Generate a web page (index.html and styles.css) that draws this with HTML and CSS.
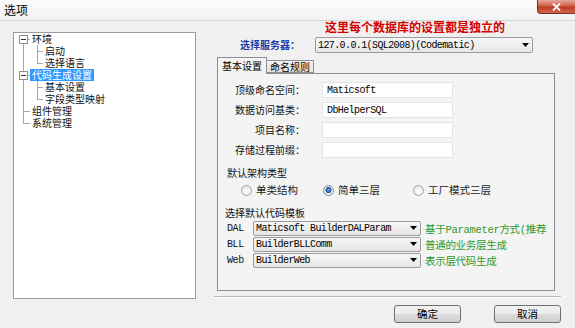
FILE: index.html
```html
<!DOCTYPE html>
<html lang="zh-CN">
<head>
<meta charset="utf-8">
<title>选项</title>
<link rel="stylesheet" href="styles.css">
</head>
<body>
<div class="window">
  <div class="titlebar">
    <span class="title">选项</span>
    <span class="close">
      <svg width="9" height="8" viewBox="0 0 9 8"><path d="M1 0.5 L8 7.5 M8 0.5 L1 7.5" stroke="#fff" stroke-width="1.8" fill="none"/></svg>
    </span>
  </div>
  <div class="main">
    <div class="tree">
      <div class="tree-row">
        <svg class="gutter g0" width="16" height="12"><rect x="5.5" y="2.5" width="8" height="8" fill="#fff" stroke="#8f8f8f"/><path d="M7 6.5 H12" stroke="#333"/><path d="M9.5 10.5 V12 M13.5 6.5 H16" stroke="#a8a8a8"/></svg>
        <span class="label">环境</span>
      </div>
      <div class="tree-row">
        <svg class="gutter g1" width="29" height="12"><path d="M9.5 0 V12 M23.5 0 V12 M23.5 6.5 H29" stroke="#a8a8a8"/></svg>
        <span class="label">启动</span>
      </div>
      <div class="tree-row">
        <svg class="gutter g1" width="29" height="12"><path d="M9.5 0 V12 M23.5 0 V6.5 H29" stroke="#a8a8a8" fill="none"/></svg>
        <span class="label">选择语言</span>
      </div>
      <div class="tree-row">
        <svg class="gutter g0" width="16" height="12"><path d="M9.5 0 V2.5 M9.5 10.5 V12 M13.5 6.5 H16" stroke="#a8a8a8"/><rect x="5.5" y="2.5" width="8" height="8" fill="#fff" stroke="#8f8f8f"/><path d="M7 6.5 H12" stroke="#333"/></svg>
        <span class="label selected">代码生成设置</span>
      </div>
      <div class="tree-row">
        <svg class="gutter g1" width="29" height="12"><path d="M9.5 0 V12 M23.5 0 V12 M23.5 6.5 H29" stroke="#a8a8a8"/></svg>
        <span class="label">基本设置</span>
      </div>
      <div class="tree-row">
        <svg class="gutter g1" width="29" height="12"><path d="M9.5 0 V12 M23.5 0 V6.5 H29" stroke="#a8a8a8" fill="none"/></svg>
        <span class="label">字段类型映射</span>
      </div>
      <div class="tree-row">
        <svg class="gutter g0" width="16" height="12"><path d="M9.5 0 V12 M9.5 6.5 H16" stroke="#a8a8a8"/></svg>
        <span class="label">组件管理</span>
      </div>
      <div class="tree-row">
        <svg class="gutter g0" width="16" height="12"><path d="M9.5 0 V6.5 H16" stroke="#a8a8a8" fill="none"/></svg>
        <span class="label">系统管理</span>
      </div>
    </div>

    <div class="right">
      <div class="notice">这里每个数据库的设置都是独立的</div>
      <div class="server-row">
        <span class="server-label">选择服务器：</span>
        <div class="combo server-combo">
          <span class="combo-text">127.0.0.1(SQL2008)(Codematic)</span>
          <svg class="arrow" width="7" height="4" viewBox="0 0 7 4"><path d="M0 0 H7 L3.5 4 Z" fill="#000"/></svg>
        </div>
      </div>
      <div class="tabs">
        <span class="tab active">基本设置</span>
        <span class="tab">命名规则</span>
      </div>
      <div class="panel">
        <div class="form">
          <label class="form-label">顶级命名空间：</label>
          <input class="field" value="Maticsoft">
          <label class="form-label">数据访问基类：</label>
          <input class="field" value="DbHelperSQL">
          <label class="form-label">项目名称：</label>
          <input class="field" value="">
          <label class="form-label">存储过程前缀：</label>
          <input class="field" value="">
        </div>
        <div class="section-title arch-title">默认架构类型</div>
        <div class="radios">
          <span class="radio-opt opt1"><span class="radio"></span>单类结构</span>
          <span class="radio-opt opt2"><span class="radio checked"></span>简单三层</span>
          <span class="radio-opt opt3"><span class="radio"></span>工厂模式三层</span>
        </div>
        <div class="section-title tpl-title">选择默认代码模板</div>
        <div class="templates">
          <span class="tpl-label">DAL</span>
          <div class="combo tpl-combo">
            <span class="combo-text">Maticsoft BuilderDALParam</span>
            <svg class="arrow" width="7" height="4" viewBox="0 0 7 4"><path d="M0 0 H7 L3.5 4 Z" fill="#000"/></svg>
          </div>
          <span class="tpl-note">基于Parameter方式(推荐</span>

          <span class="tpl-label">BLL</span>
          <div class="combo tpl-combo">
            <span class="combo-text">BuilderBLLComm</span>
            <svg class="arrow" width="7" height="4" viewBox="0 0 7 4"><path d="M0 0 H7 L3.5 4 Z" fill="#000"/></svg>
          </div>
          <span class="tpl-note">普通的业务层生成</span>

          <span class="tpl-label">Web</span>
          <div class="combo tpl-combo">
            <span class="combo-text">BuilderWeb</span>
            <svg class="arrow" width="7" height="4" viewBox="0 0 7 4"><path d="M0 0 H7 L3.5 4 Z" fill="#000"/></svg>
          </div>
          <span class="tpl-note">表示层代码生成</span>
        </div>
      </div>
      <div class="separator"></div>
      <div class="buttons">
        <button class="btn">确定</button>
        <button class="btn">取消</button>
      </div>
    </div>
  </div>
</div>
</body>
</html>
```
FILE: styles.css
```css
html, body {
  margin: 0;
  padding: 0;
  background: #f0f0f0;
}

.window {
  width: 575px;
  height: 328px;
  overflow: hidden;
  background: #f0f0f0;
  font-family: "Noto Sans CJK SC", "Noto Sans", sans-serif;
  font-size: 10px;
  color: #000;
}

/* ---------- title bar ---------- */
.titlebar {
  height: 20px;
  display: flex;
  align-items: flex-start;
  background: linear-gradient(#fbfbfb, #f2f3f4);
  border-bottom: 1px solid #d6d6d6;
}

.title {
  padding-left: 4px;
  font-size: 12px;
  line-height: 20px;
}

.close {
  margin-left: auto;
  width: 38px;
  height: 14px;
  box-sizing: border-box;
  display: flex;
  align-items: center;
  justify-content: center;
  border: 1px solid #7d2a22;
  border-top: none;
  border-right: none;
  border-radius: 0 0 0 4px;
  background: linear-gradient(#e9a89b 0%, #d0604c 45%, #bf3a25 55%, #d2664d 100%);
}

/* ---------- main ---------- */
.main {
  display: flex;
  align-items: flex-start;
}

/* ---------- tree ---------- */
.tree {
  margin: 11px 0 0 13px;
  width: 183px;
  height: 267px;
  box-sizing: border-box;
  border: 1px solid #9b9b9b;
  background: #fff;
}

.tree-row {
  display: flex;
  align-items: center;
  height: 12px;
}

.gutter {
  flex: none;
  display: block;
  shape-rendering: crispEdges;
}

.label {
  padding: 0 2px;
  line-height: 12px;
  height: 12px;
  white-space: nowrap;
  color: #111;
}

.label.selected {
  background: #3399ff;
  color: #fff;
}

/* ---------- right column ---------- */
.right {
  margin-left: 18px;
  width: 347px;
  display: flex;
  flex-direction: column;
}

.notice {
  padding-left: 111px;
  height: 11px;
  line-height: 11px;
  font-size: 12px;
  font-weight: bold;
  color: #d40000;
  white-space: nowrap;
}

.server-row {
  margin-top: 5px;
  height: 16px;
  display: flex;
  align-items: center;
}

.server-label {
  padding-left: 26px;
  width: 75px;
  flex: none;
  font-weight: bold;
  color: #1d3aa8;
  line-height: 16px;
}

.combo {
  box-sizing: border-box;
  display: flex;
  align-items: center;
  border: 1px solid #9c9c9c;
  border-radius: 2px;
  background: linear-gradient(#f7f7f7, #e6e6e6);
  padding: 0 3px 0 2px;
}

.combo-text {
  flex: 1;
  font-family: "Liberation Mono", "DejaVu Sans Mono", monospace;
  font-size: 10px;
  letter-spacing: -0.6px;
  white-space: nowrap;
  overflow: hidden;
  color: #000;
}

.arrow {
  flex: none;
  display: block;
}

.server-combo {
  width: 218px;
  height: 16px;
}

/* ---------- tabs ---------- */
.tabs {
  margin: 4px 0 0 3px;
  height: 16px;
  display: flex;
  align-items: flex-end;
}

.tab {
  box-sizing: border-box;
  border: 1px solid #8c8e94;
  text-align: center;
  white-space: nowrap;
}

.tab.active {
  position: relative;
  z-index: 1;
  width: 50px;
  height: 17px;
  margin-bottom: -1px;
  border-bottom: none;
  background: #f4f4f4;
  line-height: 16px;
}

.tab:not(.active) {
  width: 47px;
  height: 13px;
  border-left: none;
  line-height: 12px;
  background: linear-gradient(#f3f3f3, #e2e2e2);
}

/* ---------- panel ---------- */
.panel {
  margin-left: 3px;
  width: 338px;
  height: 218px;
  box-sizing: border-box;
  border: 1px solid #8c8e94;
  background: #f4f4f4;
  padding-top: 8px;
}

.form {
  display: grid;
  grid-template-columns: 87px 131px;
  grid-auto-rows: 16px;
  column-gap: 17px;
  row-gap: 4px;
}

.form-label {
  text-align: right;
  line-height: 16px;
  white-space: nowrap;
  color: #111;
}

.field {
  box-sizing: border-box;
  width: 131px;
  height: 16px;
  margin: 0;
  padding: 0 0 0 4px;
  border: 1px solid #e4e4e4;
  background: #fff;
  font-family: "Liberation Mono", "DejaVu Sans Mono", monospace;
  font-size: 10px;
  letter-spacing: -0.6px;
  color: #000;
  outline: none;
}

.section-title {
  height: 12px;
  line-height: 12px;
  white-space: nowrap;
  color: #111;
}

.arch-title {
  margin-top: 9px;
  padding-left: 9px;
}

.radios {
  margin-top: 5px;
  padding-left: 23px;
  height: 12px;
  display: flex;
  align-items: center;
}

.radio-opt {
  display: flex;
  align-items: center;
  gap: 4px;
  white-space: nowrap;
  line-height: 12px;
  font-size: 10.5px;
  color: #222;
}

.opt1 { width: 82px; }
.opt2 { width: 90px; }

.radio {
  flex: none;
  width: 11px;
  height: 11px;
  box-sizing: border-box;
  border-radius: 50%;
  border: 1px solid #a3a3a3;
  background: radial-gradient(circle at 50% 60%, #ffffff 0%, #f0f0f0 50%, #d8d8d8 100%);
}

.radio.checked {
  border-color: #7c8a9c;
  background: radial-gradient(circle at 50% 45%, #6fb2f0 0%, #1f5ea8 35%, #1b4f8e 42%, #f2f2f2 50%, #e0e0e0 100%);
}

.tpl-title {
  margin-top: 11px;
  padding-left: 7px;
}

.templates {
  margin-top: 1px;
  padding-left: 9px;
  display: grid;
  grid-template-columns: 26px 168px auto;
  grid-auto-rows: 16px;
  align-items: center;
}

.tpl-label {
  font-family: "Liberation Mono", "DejaVu Sans Mono", monospace;
  font-size: 10px;
  letter-spacing: -0.4px;
  color: #111;
}

.tpl-combo {
  height: 15px;
}

.tpl-note {
  padding-left: 4px;
  white-space: nowrap;
  color: #2d9a2d;
  font-family: "Liberation Mono", "Noto Sans CJK SC", monospace;
  font-size: 10.5px;
  letter-spacing: -0.3px;
}

/* ---------- bottom ---------- */
.separator {
  margin-top: 5px;
  height: 0;
  border-top: 1px solid #b9b9b9;
  border-bottom: 1px solid #ffffff;
}

.buttons {
  margin-top: 7px;
  display: flex;
  justify-content: flex-end;
  gap: 33px;
}

.btn {
  box-sizing: border-box;
  width: 67px;
  height: 18px;
  margin: 0;
  padding: 0;
  border: 1px solid #707070;
  border-radius: 3px;
  background: linear-gradient(#f2f2f2 0%, #ebebeb 50%, #dddddd 51%, #cfcfcf 100%);
  font-family: "Noto Sans CJK SC", sans-serif;
  font-size: 10.5px;
  line-height: 16px;
  color: #000;
}
```
